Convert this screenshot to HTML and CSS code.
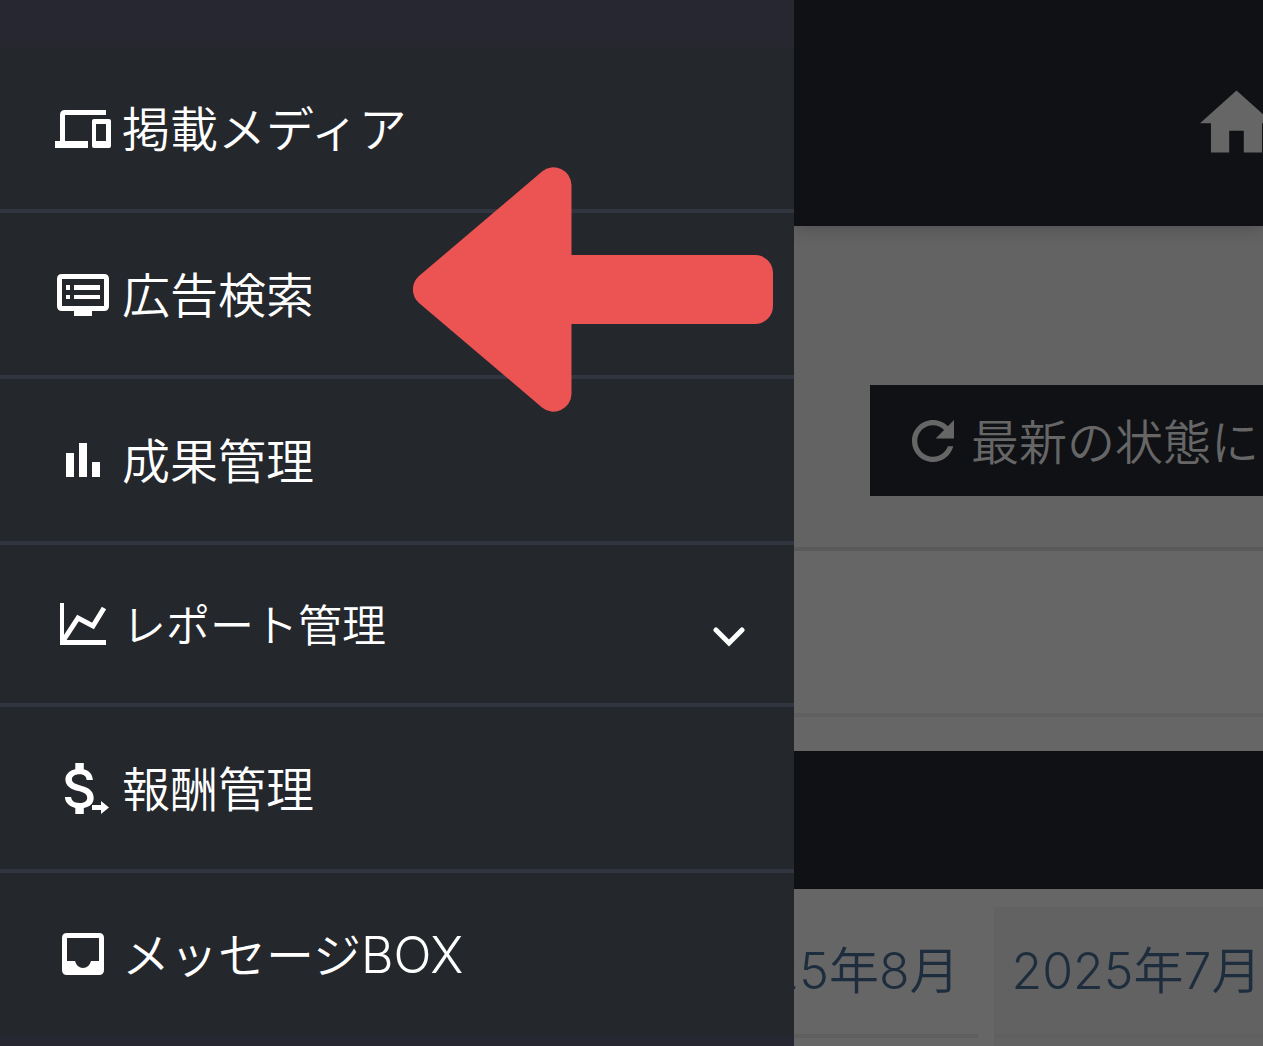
FILE: index.html
```html
<!DOCTYPE html>
<html lang="ja">
  <head>
    <meta charset="utf-8" />
    <meta name="viewport" content="width=device-width, initial-scale=1.0" />
    <title>広告検索</title>
    <link rel="stylesheet" href="styles.css">
  </head>
  <body>
    <div class="layout">
      <nav class="drawer">
        <ul class="menu">
          <li class="menu-item">
            <a class="menu-link" href="#">
              <svg class="menu-icon" viewBox="0 0 58 58">
                <path d="M6 42V16q0-5 5-5h41v5H11v26h23v7H1v-7z" />
                <path fill-rule="evenodd" d="M40 20h15q2 0 2 2v25q0 2-2 2H40q-2 0-2-2V22q0-2 2-2zM42 25v17h10V25z" />
              </svg>
              <span class="label">掲載メディア</span>
            </a>
          </li>
          <li class="menu-item">
            <a class="menu-link" href="#">
              <svg class="menu-icon" viewBox="0 0 58 58">
                <path fill-rule="evenodd" d="M8 9h42q5 0 5 5v27q0 5-5 5H38v5H20v-5H8q-5 0-5-5V14q0-5 5-5zM8 14v27h42V14z" />
                <path d="M12 20h4v5h-4zM20 20h26v5H20zM12 30h4v4h-4zM20 30h26v4H20z" />
              </svg>
              <span class="label">広告検索</span>
            </a>
            <svg class="pointer" viewBox="0 0 360 245" aria-hidden="true">
              <path d="M129 4.500A18 18 0 0 1 158.500 18V88H342a18 18 0 0 1 18 18v33a18 18 0 0 1-18 18H158.500v70A18 18 0 0 1 129 240.500L6 136A18 18 0 0 1 6 109z" />
            </svg>
          </li>
          <li class="menu-item">
            <a class="menu-link" href="#">
              <svg class="menu-icon" viewBox="0 0 58 58">
                <path d="M12 22h8v24h-8zM25 12h8v34h-8zM38 31h8v15h-8z" />
              </svg>
              <span class="label">成果管理</span>
            </a>
          </li>
          <li class="menu-item">
            <button class="menu-link menu-toggle" type="button">
              <svg class="menu-icon" viewBox="0 0 58 58">
                <path d="M6 8h4v37h42v5H6z" />
                <path class="line" d="M9 46L24 23l15 8L50 13" />
              </svg>
              <span class="label">レポート管理</span>
              <svg class="chevron" viewBox="0 0 32 48">
                <path d="M3 30l13 13 13-13" />
              </svg>
            </button>
          </li>
          <li class="menu-item">
            <a class="menu-link" href="#">
              <svg class="menu-icon" viewBox="0 0 58 58">
                <path transform="translate(-7 -4.400) scale(2.830)" d="M11.800 10.900c-2.270-.590-3-1.200-3-2.150 0-1.090 1.010-1.850 2.700-1.850 1.780 0 2.440.850 2.500 2.100h2.210c-.070-1.720-1.120-3.300-3.210-3.810V3h-3v2.160c-1.940.420-3.500 1.680-3.500 3.610 0 2.310 1.910 3.460 4.700 4.130 2.500.600 3 1.480 3 2.410 0 .690-.490 1.790-2.700 1.790-2.060 0-2.870-.920-2.980-2.100h-2.200c.120 2.190 1.760 3.420 3.680 3.830V21h3v-2.150c1.950-.370 3.500-1.500 3.500-3.550 0-2.840-2.430-3.810-4.700-4.400z" />
                <path d="M38 46h9v-4l8 6.500-8 6.500v-4h-9z" />
              </svg>
              <span class="label">報酬管理</span>
            </a>
          </li>
          <li class="menu-item">
            <a class="menu-link" href="#">
              <svg class="menu-icon" viewBox="0 0 58 58">
                <path fill-rule="evenodd" d="M13 8h32q5 0 5 5v32q0 5-5 5H13q-5 0-5-5V13q0-5 5-5zM13 13v23h8q2 7 8 7t8-7h8V13z" />
              </svg>
              <span class="label">メッセージ<span class="latin">BOX</span></span>
            </a>
          </li>
        </ul>
      </nav>

      <main class="page">
        <header class="page-header">
          <a class="home" href="#" aria-label="ホーム">
            <svg viewBox="2 3 20 17"><path d="M10 20v-6h4v6h5v-8h3L12 3 2 12h3v8z" /></svg>
          </a>
        </header>
        <section class="toolbar">
          <button class="refresh" type="button">
            <svg class="refresh-icon" viewBox="4 4 16 16">
              <path d="M17.650 6.350C16.200 4.900 14.210 4 12 4c-4.420 0-7.990 3.580-7.990 8s3.570 8 7.990 8c3.730 0 6.840-2.550 7.730-6h-2.080c-.820 2.330-3.040 4-5.650 4-3.310 0-6-2.690-6-6s2.690-6 6-6c1.660 0 3.140.690 4.220 1.780L13 11h7V4z" />
            </svg>
            <span class="label">最新の状態に</span>
          </button>
        </section>
        <section class="blank"></section>
        <section class="report">
          <div class="report-bar"></div>
          <ul class="tabs">
            <li class="tab active"><a href="#">2025年8月</a></li>
            <li class="tab"><a href="#">2025年7月</a></li>
          </ul>
        </section>
      </main>
    </div>
  </body>
</html>
```
FILE: styles.css
```css
* {
  box-sizing: border-box;
}

body {
  margin: 0;
  font-family: Inter, "Noto Sans CJK JP", sans-serif;
  font-size: 48px;
  font-weight: 350;
  line-height: 66px;
  background: #666;
}

ul {
  list-style: none;
  margin: 0;
  padding: 0;
}

a {
  color: inherit;
  text-decoration: none;
}

button {
  border: 0;
  font: inherit;
  text-align: left;
}

svg {
  display: block;
  flex: none;
  fill: currentColor;
}

.layout {
  display: grid;
  grid-template-columns: 794fr 469fr;
  height: 100vh;
  overflow: hidden;
}

.label {
  padding-top: 4px;
}

/* drawer */
.drawer {
  padding-top: 47px;
  background: #272732;
  color: #fff;
}

.menu {
  background: #24272c;
}

.menu-item {
  position: relative;
  border-bottom: 4px solid #31353f;
}

.menu-item:last-child {
  border-bottom: 0;
}

.menu-link {
  display: flex;
  align-items: center;
  gap: 10px;
  width: 100%;
  padding: 46px 49px 46px 54px;
  white-space: nowrap;
}

.menu-toggle {
  background: none;
  color: inherit;
  font-size: 44px;
  line-height: 62px;
}

.menu-icon {
  width: 58px;
  height: 58px;
}

.menu-icon .line {
  fill: none;
  stroke: currentColor;
  stroke-width: 5;
}

.latin {
  font-size: 50px;
  font-weight: 300;
  line-height: 1;
}

.chevron {
  width: 32px;
  height: 48px;
  margin-left: auto;
  fill: none;
  stroke: currentColor;
  stroke-width: 5;
  stroke-linecap: round;
}

.pointer {
  position: absolute;
  top: -46px;
  right: 21px;
  width: 360px;
  height: 245px;
  color: #ec5353;
  z-index: 1;
}

/* dimmed page */
.page {
  min-width: 0;
  overflow: hidden;
  background: #666;
  color: #666;
}

.page-header {
  position: relative;
  display: flex;
  justify-content: flex-end;
  height: 226px;
  padding-top: 90px;
  background: #101115;
  box-shadow: 0 2px 16px rgba(0, 0, 0, 0.2);
}

.home {
  margin-right: -10px;
}

.home svg {
  width: 73px;
  height: 63px;
}

.toolbar {
  padding: 159px 0 51px 76px;
  background: #636363;
  border-bottom: 4px solid #5a5a5a;
}

.refresh {
  display: flex;
  align-items: center;
  gap: 17px;
  width: 100%;
  padding: 21px 0 20px 42px;
  background: #101115;
  color: #666;
  white-space: nowrap;
}

.refresh-icon {
  width: 42px;
  height: 42px;
}

.blank {
  height: 166px;
  border-bottom: 4px solid #606060;
}

.report {
  padding-top: 34px;
}

.report-bar {
  height: 138px;
  background: #101115;
}

/* month tabs, scrolled partly under the drawer */
.tabs {
  display: flex;
  gap: 16px;
  margin-left: -105px;
  padding-top: 18px;
}

.tab {
  flex: none;
  padding-bottom: 8px;
  background: #626262;
  color: #1d2d3d;
  font-size: 50px;
  white-space: nowrap;
}

.tab.active {
  background: none;
}

.tab a {
  display: block;
  padding: 31px 18px 30px;
  border-bottom: 4px solid #5f5f5f;
}
```
